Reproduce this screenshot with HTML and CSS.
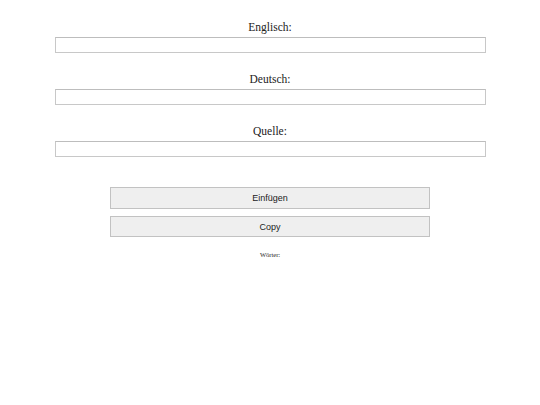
FILE: index.html
```html
<!DOCTYPE html>
<html>
<head>
<meta charset="utf-8">
<link rel="stylesheet" href="styles.css">
</head>
<body>
<div class="page">
  <div class="field">
    <label class="label">Englisch:</label>
    <input class="input" type="text">
  </div>
  <div class="field">
    <label class="label">Deutsch:</label>
    <input class="input" type="text">
  </div>
  <div class="field">
    <label class="label">Quelle:</label>
    <input class="input" type="text">
  </div>
  <div class="buttons">
    <button class="btn">Einfügen</button>
    <button class="btn">Copy</button>
  </div>
  <div class="words">Wörter:</div>
</div>
</body>
</html>
```
FILE: styles.css
```css
html, body {
  margin: 0;
  padding: 0;
  background: #ffffff;
}
.page {
  display: flex;
  flex-direction: column;
  align-items: center;
  padding-top: 21px;
  font-family: "Liberation Serif", serif;
}
.field {
  width: 431px;
  display: flex;
  flex-direction: column;
  align-items: center;
  margin-bottom: 20px;
}
.label {
  font-size: 11.5px;
  line-height: 13px;
  color: #222222;
  margin-bottom: 3px;
}
.input {
  box-sizing: border-box;
  width: 431px;
  height: 16px;
  margin: 0;
  border: 1px solid #c8c8c8;
  border-top-color: #bdbdbd;
  background: #ffffff;
  padding: 0;
}
.buttons {
  margin-top: 10px;
  display: flex;
  flex-direction: column;
  gap: 7px;
}
.btn {
  box-sizing: border-box;
  width: 320px;
  height: 22px;
  margin: 0;
  padding: 0;
  background: #efefef;
  border: 1px solid #c2c2c2;
  border-radius: 0;
  font-family: "Liberation Sans", sans-serif;
  font-size: 9px;
  color: #222222;
}
.btn + .btn {
  height: 21px;
}
.words {
  margin-top: 14px;
  font-size: 6.5px;
  line-height: 8px;
  color: #222222;
}
```
